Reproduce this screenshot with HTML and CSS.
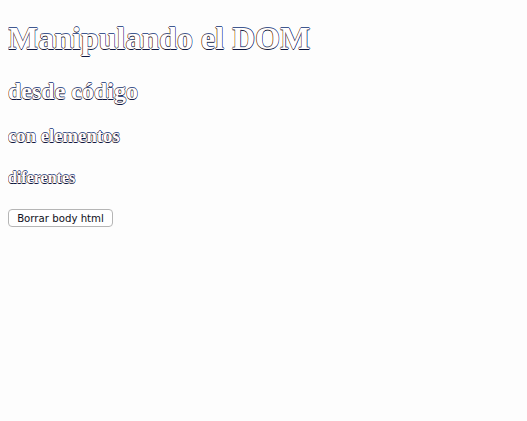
FILE: index.html
```html
<!DOCTYPE html>
<html lang="es">
<head>
<meta charset="utf-8">
<title>Manipulando el DOM</title>
<link rel="stylesheet" href="styles.css">
</head>
<body>
<h1 class="ghost title">Manipulando el DOM</h1>
<h2 class="ghost">desde código</h2>
<h3 class="ghost">con elementos</h3>
<h4 class="ghost">diferentes</h4>
<button class="btn">Borrar body html</button>
</body>
</html>
```
FILE: styles.css
```css
html {
  background: #fdfdfd;
}
body {
  margin: 8px;
  font-family: "Liberation Serif", "Times New Roman", serif;
}
.title {
  margin-top: 12px;
}
.ghost {
  color: #ffffff;
  text-shadow: -0.6px 0 #8a4a10, 0.6px 0 #0a2a80, 0 0.6px #101840, 0 -0.6px #405890;
}
.btn {
  font-family: "DejaVu Sans", "Liberation Sans", sans-serif;
  font-size: 10.2px;
  color: #101020;
  background: #fff;
  border: 1px solid #b5b5b5;
  border-radius: 4px;
  padding: 1px 7px;
  height: 18px;
  width: 105px;
}
```
